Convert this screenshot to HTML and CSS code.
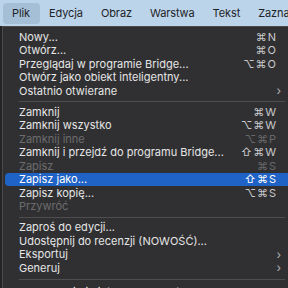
FILE: index.html
```html
<!DOCTYPE html>
<html>
  <head>
    <meta charset="UTF-8">
    <title>Plik menu</title>
    <link rel="stylesheet" href="styles.css">
  </head>
  <body>
    <div class="menubar">
      <span class="top active">Plik</span>
      <span class="top">Edycja</span>
      <span class="top">Obraz</span>
      <span class="top">Warstwa</span>
      <span class="top">Tekst</span>
      <span class="top">Zaznaczanie</span>
    </div>
    <div class="stage">
      <div class="menu">
        <div class="item"><span>Nowy...</span><span class="key">⌘N</span></div>
        <div class="item"><span>Otwórz...</span><span class="key">⌘O</span></div>
        <div class="item"><span>Przeglądaj w programie Bridge...</span><span class="key">⌥⌘O</span></div>
        <div class="item"><span>Otwórz jako obiekt inteligentny...</span></div>
        <div class="item"><span>Ostatnio otwierane</span><span class="arrow">›</span></div>
        <div class="sep"></div>
        <div class="item"><span>Zamknij</span><span class="key">⌘W</span></div>
        <div class="item"><span>Zamknij wszystko</span><span class="key">⌥⌘W</span></div>
        <div class="item off"><span>Zamknij inne</span><span class="key">⌥⌘P</span></div>
        <div class="item"><span>Zamknij i przejdź do programu Bridge...</span><span class="key">⇧⌘W</span></div>
        <div class="item off"><span>Zapisz</span><span class="key">⌘S</span></div>
        <div class="item hi"><span>Zapisz jako...</span><span class="key">⇧⌘S</span></div>
        <div class="item"><span>Zapisz kopię...</span><span class="key">⌥⌘S</span></div>
        <div class="item off"><span>Przywróć</span></div>
        <div class="sep"></div>
        <div class="item"><span>Zaproś do edycji...</span></div>
        <div class="item"><span>Udostępnij do recenzji (NOWOŚĆ)...</span></div>
        <div class="item"><span>Eksportuj</span><span class="arrow">›</span></div>
        <div class="item"><span>Generuj</span><span class="arrow">›</span></div>
        <div class="sep last"></div>
        <div class="item"><span>Przeszukaj bibliotekę Adobe Stock...</span></div>
      </div>
    </div>
  </body>
</html>
```

FILE: styles.css
```css
html {
  font-family: Inter, "Noto Sans", sans-serif;
}
body {
  margin: 0;
  width: 288px;
  height: 288px;
  overflow: hidden;
  background: #242426;
}
.menubar {
  height: 26px;
  display: flex;
  align-items: center;
  padding-left: 3px;
  background: #bcd4ea;
  font-size: 11px;
  letter-spacing: -0.1px;
  color: #1e2328;
  white-space: nowrap;
  overflow: hidden;
}
.top {
  padding: 3px 9px 4px 9px;
  border-radius: 4px;
}
.active {
  padding-right: 10px;
  background: #a5bfd6;
}
.stage {
  padding-left: 2px;
}
.menu {
  width: 310px;
  background: #303032;
  border-top: 1px solid #4a4a4c;
  border-left: 1px solid #4a4a4c;
  padding: 3px 0 0 2px;
  font-size: 11px;
  color: #e6e6e6;
}
.item {
  height: 13.5px;
  display: flex;
  align-items: center;
  justify-content: space-between;
  padding: 0 38px 0 14px;
  border-radius: 4px;
  white-space: nowrap;
}
.key {
  color: #c9c9cb;
  letter-spacing: 1px;
  font-size: 11px;
}
.arrow {
  color: #b0b0b2;
  font-size: 12px;
  margin-right: -4px;
}
.off {
  color: #6c6c6e;
}
.off .key {
  color: #68686a;
}
.hi {
  background: #1f63c6;
  color: #ffffff;
}
.hi .key {
  color: #ffffff;
}
.sep {
  height: 1px;
  margin: 3.5px 30px 3px 14px;
  background: #4e4e50;
}
.last {
  margin-top: 4.5px;
  margin-bottom: 5px;
}
```
